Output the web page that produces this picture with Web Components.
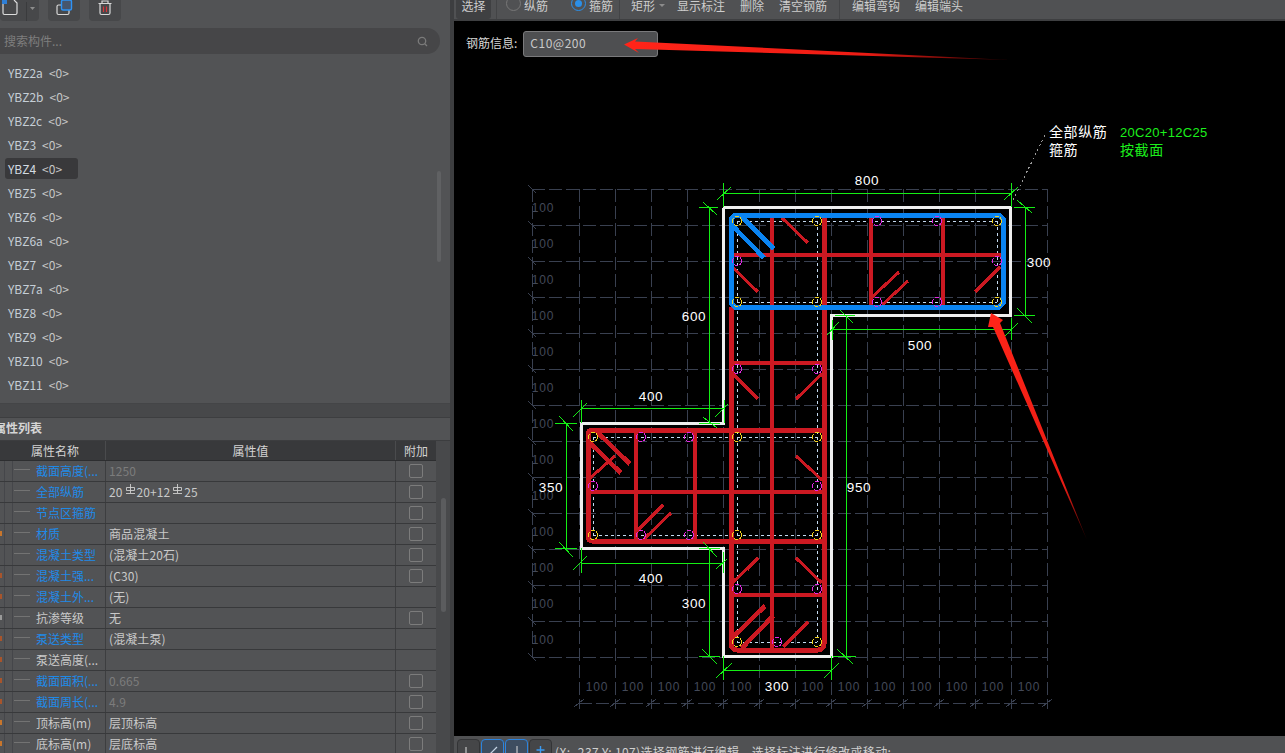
<!DOCTYPE html>
<html lang="zh">
<head>
<meta charset="utf-8">
<title>钢筋编辑</title>
<style>
html,body{margin:0;padding:0;width:100%;height:100%;overflow:hidden;background:#000;}
body{font:12px "Noto Sans CJK SC","Noto Sans",sans-serif;color:#d4d4d4;}
</style>
</head>
<body>
<x-app>
  <x-left-panel slot="left"></x-left-panel>
  <x-main slot="main"></x-main>
</x-app>
<script>
const FONT='"Noto Sans CJK SC","Noto Sans",sans-serif';
function def(name,css,html,init){
  customElements.define(name,class extends HTMLElement{
    connectedCallback(){
      if(this.shadowRoot)return;
      const r=this.attachShadow({mode:'open'});
      r.innerHTML='<style>'+css+'</style>'+(typeof html==='function'?html(this):html);
      if(init)init(this,r);
    }
  });
}
def('x-app',`:host{display:flex;width:1285px;height:753px;overflow:hidden;background:#000;}
 .l{flex:0 0 450px;height:753px;overflow:hidden;}
 .d{flex:0 0 4px;background:#3d3e40;}
 .m{flex:1;min-width:0;height:753px;overflow:hidden;}`,
 `<div class="l"><slot name="left"></slot></div><div class="d"></div><div class="m"><slot name="main"></slot></div>`);

def('x-tool-btn',`:host{display:block;height:21px;background:#47484a;border-radius:0 0 4px 4px;overflow:hidden;}
 svg{display:block;}`,
 h=>{const k=h.getAttribute('kind');
  const ic={
   doc:`<svg width="39" height="21" viewBox="0 0 39 21"><path d="M3 0V13a1.5 1.5 0 0 0 1.5 1.5H15.500a1.500 1.500 0 0 0 1.500-1.500V3L14 0" fill="none" stroke="#dcdcdc" stroke-width="1.200"/><rect x="2" y="0" width="5" height="4" fill="#2f7fd6"/><path d="M26.500 2V21" stroke="#3a3b3d"/><path d="M30 7h5l-2.500 3z" fill="#8d8d8d"/></svg>`,
   copy:`<svg width="32" height="21" viewBox="0 0 32 21"><rect x="9" y="5" width="12" height="9.500" rx="1.500" fill="none" stroke="#d8d8d8" stroke-width="1.200"/><rect x="13.500" y="0" width="10" height="10" rx="1.500" fill="#46566e" stroke="#2e93f5" stroke-width="1.400"/></svg>`,
   trash:`<svg width="32" height="21" viewBox="0 0 32 21"><path d="M11 3.500V13a1.500 1.500 0 0 0 1.500 1.500h7A1.500 1.500 0 0 0 21 13V3.500M9.500 3.500h13M13 3.500V1h6v2.500" fill="none" stroke="#d8d8d8" stroke-width="1.200"/><path d="M14.500 6.500V12M17.500 6.500V12" stroke="#d8343a" stroke-width="1.200"/></svg>`
  };return ic[k];});

def('x-search',`:host{display:block;height:26px;margin:7px 10px 0 -14px;background:#464648;border-radius:13px;position:relative;}
 .t{position:absolute;left:18px;top:0;line-height:26px;font:12px/26px ${FONT};color:#7e7e7e;}
 svg{position:absolute;right:12px;top:8px;}`,
 `<span class="t">搜索构件...</span><svg width="11" height="11" viewBox="0 0 11 11"><circle cx="5" cy="5" r="3.700" fill="none" stroke="#7a7a7a" stroke-width="1.300"/><path d="M7.800 7.800L10 10" stroke="#7a7a7a" stroke-width="1.300"/></svg>`);

def('x-list-item',`:host{display:flex;align-items:center;height:24px;padding-left:5px;font:12px ${FONT};color:#c5ced6;}
 span{display:block;height:21px;line-height:21px;padding:0 3px;border-radius:3px;}
 :host([selected]) span{background:#39393b;color:#d3dbe2;width:67px;}
 i{font-style:normal;margin-left:6px;color:#c6c6c6;}`,
 h=>`<span>${h.getAttribute('name')}<i>&lt;0&gt;</i></span>`);

def('x-rebar-glyph',`:host{display:inline-block;width:11px;height:12px;vertical-align:2px;margin:0 1px 0 2px;}svg{display:block;}`,
 `<svg width="11" height="12" viewBox="0 0 11 12"><path d="M5.500 1V10M1.500 4.500H9.500V7.500H1.500ZM1 10.500H10" fill="none" stroke="#cfcfcf" stroke-width="0.900"/></svg>`);

def('x-prop-row',`:host{display:grid;grid-template-columns:5px 8px 92px 1px 289px 1px 40px;height:21px;box-sizing:border-box;border-bottom:1px solid #38393b;font:12px/20px ${FONT};color:#c9c9c9;background:#525355;}
 .a{position:relative;border-right:1px solid #45464a;}
 .a b{position:absolute;left:0;top:7px;width:1.500px;height:5px;background:var(--o,transparent);}
 .b{border-right:1px solid #45464a;}
 .n{position:relative;padding-left:23px;white-space:nowrap;overflow:hidden;}
 .n::before{content:"";position:absolute;left:1px;top:8px;width:16px;height:1px;background:#737373;}
 :host([blue]) .n{color:#1f8ae8;}
 .s{background:#3d3e40;}
 .v{padding-left:3px;white-space:nowrap;letter-spacing:.1px;}
 :host([muted]) .v{color:#7c7c7c;}
 .c{display:flex;justify-content:center;align-items:center;padding-bottom:1px;}
 .c u{display:block;width:12px;height:12px;border:1px solid #7c7c7c;border-radius:2px;}`,
 h=>`<div class="a"><b style="--o:${h.getAttribute('tick')||'transparent'}"></b></div><div class="b"></div><div class="n">${h.getAttribute('label')}</div><div class="s"></div><div class="v"><slot></slot></div><div class="s"></div><div class="c">${h.hasAttribute('nocheck')?'':'<u></u>'}</div>`);

def('x-prop-table',`:host{display:block;position:relative;}
 .hd{display:grid;grid-template-columns:5px 100px 1px 289px 1px 40px;height:20px;box-sizing:border-box;width:436px;background:#38393b;border-bottom:1px solid #2d2e30;font:12px/19px ${FONT};color:#d3d3d3;text-align:center;}
 .s{background:#4a4b4d;}
 .rows{width:436px;}
 .bar{position:absolute;left:436px;top:0;width:14px;bottom:0;background:#48494b;}
 .th{position:absolute;left:5px;top:57px;width:5px;height:114px;border-radius:3px;background:#5b5c5e;}`,
 `<div class="hd"><span></span><span>属性名称</span><span class="s"></span><span>属性值</span><span class="s"></span><span>附加</span></div><div class="rows"><slot></slot></div><div class="bar"><div class="th"></div></div>`);

def('x-left-panel',`:host{display:block;width:450px;height:753px;background:#525355;overflow:hidden;position:relative;}
 .top{display:flex;height:21px;}
 .list{height:343px;margin-top:6px;position:relative;}
 .scroll{position:absolute;left:437px;top:111px;width:4px;height:91px;border-radius:2px;background:#606163;}
 .band{height:15px;background:#47484a;border-top:1px solid #444547;border-bottom:1px solid #3d3e40;box-sizing:border-box;}
 .head{height:23px;background:#525355;font:bold 12px/20px ${FONT};color:#d5d5d5;padding-left:0;text-indent:-6px;overflow:hidden;border-bottom:1px solid #3c3d3f;box-sizing:border-box;}`,
 `<div class="top">
   <x-tool-btn kind="doc" style="width:39px"></x-tool-btn>
   <x-tool-btn kind="copy" style="width:32px;margin-left:9px"></x-tool-btn>
   <x-tool-btn kind="trash" style="width:32px;margin-left:9px"></x-tool-btn>
 </div>
 <x-search></x-search>
 <div class="list">
  ${['YBZ2a','YBZ2b','YBZ2c','YBZ3','YBZ4','YBZ5','YBZ6','YBZ6a','YBZ7','YBZ7a','YBZ8','YBZ9','YBZ10','YBZ11'].map(n=>`<x-list-item name="${n}"${n==='YBZ4'?' selected':''}></x-list-item>`).join('')}
  <div class="scroll"></div>
 </div>
 <div class="band"></div>
 <div class="head">属性列表</div>
 <x-prop-table>
  <x-prop-row blue muted label="截面高度(...">1250</x-prop-row>
  <x-prop-row blue label="全部纵筋">20<x-rebar-glyph></x-rebar-glyph>20+12<x-rebar-glyph></x-rebar-glyph>25</x-prop-row>
  <x-prop-row blue label="节点区箍筋"></x-prop-row>
  <x-prop-row blue tick="#c8762c" label="材质">商品混凝土</x-prop-row>
  <x-prop-row blue label="混凝土类型">(混凝土20石)</x-prop-row>
  <x-prop-row blue tick="#a8552c" label="混凝土强...">(C30)</x-prop-row>
  <x-prop-row blue nocheck tick="#a8552c" label="混凝土外...">(无)</x-prop-row>
  <x-prop-row tick="#9a9a9a" label="抗渗等级">无</x-prop-row>
  <x-prop-row blue nocheck tick="#a8552c" label="泵送类型">(混凝土泵)</x-prop-row>
  <x-prop-row nocheck tick="#a8552c" label="泵送高度(..."></x-prop-row>
  <x-prop-row blue muted tick="#a8552c" label="截面面积(...">0.665</x-prop-row>
  <x-prop-row blue muted tick="#a8552c" label="截面周长(...">4.9</x-prop-row>
  <x-prop-row tick="#c8762c" label="顶标高(m)">层顶标高</x-prop-row>
  <x-prop-row tick="#c8762c" label="底标高(m)">层底标高</x-prop-row>
 </x-prop-table>`);

def('x-top-bar',`:host{display:flex;align-items:flex-start;height:21px;box-sizing:border-box;background:#505153;border-bottom:2px solid #3e3f41;overflow:hidden;font:12px/12px ${FONT};color:#cdcdcd;white-space:nowrap;}
 .sel{margin-left:2px;width:35px;height:19px;background:#3f4042;border-radius:0 0 3px 3px;text-align:center;line-height:11px;}
 .t{display:block;line-height:11px;}
 .sep{width:1px;height:19px;background:#434446;}
 .r{width:13px;height:13px;border-radius:50%;border:1px solid #777;margin-top:-4px;box-sizing:content-box;position:relative;flex:none;}
 .r.on{border-color:#2b8fe8;}
 .r.on::after{content:"";position:absolute;left:3px;top:3px;width:7px;height:7px;border-radius:50%;background:#2b8fe8;}
 .caret{width:0;height:0;border:3px solid transparent;border-top:3px solid #8c8c8c;margin:4px 0 0 4px;}`,
 `<div class="sel">选择</div>
  <div class="sep" style="margin-left:5px"></div>
  <div class="r" style="margin-left:9px"></div><span class="t" style="margin-left:3px">纵筋</span>
  <div class="r on" style="margin-left:23px"></div><span class="t" style="margin-left:3px">箍筋</span>
  <div class="sep" style="margin-left:6px"></div>
  <span class="t" style="margin-left:11px">矩形</span><div class="caret"></div>
  <span class="t" style="margin-left:12px">显示标注</span>
  <span class="t" style="margin-left:15px">删除</span>
  <span class="t" style="margin-left:15px">清空钢筋</span>
  <div class="sep" style="margin-left:12px"></div>
  <span class="t" style="margin-left:12px">编辑弯钩</span>
  <span class="t" style="margin-left:15px">编辑端头</span>`);

def('x-rebar-field',`:host{position:absolute;left:12px;top:10px;display:flex;align-items:center;gap:6px;font:12px ${FONT};color:#d8d8d8;z-index:1;}
 span{display:block;margin-bottom:3px;}
 .b{display:flex;align-items:center;width:127px;height:21px;padding:0 0 3px 6px;border:1px solid #7a7a7c;border-radius:3px;background:#4e4f51;box-sizing:content-box;position:relative;color:#c9c9c9;letter-spacing:.5px;}
 .b::after{content:"";position:absolute;right:5px;top:11px;border:3px solid transparent;border-top-color:#8c8c8c;}`,
 `<span>钢筋信息:</span><div class="b">C10@200</div>`);

def('x-drawing',`:host{display:block;position:absolute;left:-454px;top:-21px;width:1285px;height:753px;z-index:2;pointer-events:none;}
 svg{display:block;shape-rendering:crispEdges;}text{font-family:"Liberation Sans",sans-serif;}
 .sm{shape-rendering:geometricPrecision;}`,
 ()=>{
  let s='';
  const line=(a,b,c,d,col,w,extra='')=>`<line x1="${a}" y1="${b}" x2="${c}" y2="${d}" stroke="${col}" stroke-width="${w}" ${extra}/>`;
  const GR='#394050',DASH='stroke-dasharray="13 4"';
  for(let y=189;y<=657;y+=36) s+=line(532,y,1047,y,GR,1,DASH);
  s+=line(532,189,532,657,GR,1,DASH);
  for(let x=579;x<=1047;x+=36) s+=line(x,189,x,709,GR,1,DASH);
  s+=line(579,703,1047,703,GR,1,DASH);
  for(let y=189;y<=657;y+=36) s+=line(528,y-4,536,y+4,GR,1);
  for(let x=579;x<=1047;x+=36) s+=line(x-5,707,x+5,699,GR,1);
  for(let y=207;y<=639;y+=36) s+=`<text x="543" y="${y+4.500}" text-anchor="middle" font-size="12" fill="#434958" letter-spacing=".8">100</text>`;
  for(let x=597;x<=1029;x+=36) if(x!==777) s+=`<text x="${x}" y="691" text-anchor="middle" font-size="12" fill="#434958" letter-spacing=".8">100</text>`;
  s+=`<path d="M723 207.500H1010.500V315H831.500V656H723.500V548H581V423.500H723.500V207.500" fill="none" stroke="#efefef" stroke-width="3"/>`;
  const D='#c4daf0',DD='stroke-dasharray="3 3"';
  [[737,221,997,221],[737,302,997,302],[593,437,817,437],[593,535,817,535],[737,642,817,642],[737,221,737,642],[817,221,817,642],[593,437,593,535],[997,221,997,302]].forEach(l=>s+=line(l[0],l[1],l[2],l[3],D,1,DD));
  const R='#cb1922';
  const red=(a,b,c,d,w=4)=>{s+=line(a,b,c,d,R,w);};
  s+=`<path d="M731 307V644a6 6 0 0 0 6 6H818a6 6 0 0 0 6-6V215" fill="none" stroke="${R}" stroke-width="5"/>`;
  s+=`<path d="M731 430H592a4 4 0 0 0-4 4V537a4 4 0 0 0 4 4H824M731 430H824" fill="none" stroke="${R}" stroke-width="5"/>`;
  red(771.500,216,771.500,650,4);
  red(871,216,871,305);red(943,216,943,305);
  red(733,255,1001,255);
  red(636,430,636,541);red(695,430,695,541);
  red(590,492,822,492);
  red(733,363,822,363);red(733,595,822,595);
  [[782,218,808,243],[732,267,758,292],[871,298,899,272],[882,305,908,281],[975,292,1000,267],
   [733,374,758,399],[822,374,796,399],
   [589,479,615,456],[796,456,822,480],[636,532,663,505],[645,538,671,513],[747,570,758,558],
   [732,583,758,558],[796,558,822,583],[783,647,808,622]].forEach(h=>red(h[0],h[1],h[2],h[3],3));
  [[589,442,621,473],[597,432,630,464],[732,638,765,606],[742,648,773,616]].forEach(h=>red(h[0],h[1],h[2],h[3],4.500));
  const B='#0a84f2';
  s+=`<path d="M735 215H999L1003 219V303L999 307H735L731 303V219Z" fill="none" stroke="${B}" stroke-width="5"/>`;
  s+=line(732,225,764,258,B,4.500)+line(742,217,774,249,B,4.500);
  const Y='#f4d21f',M='#e327e3';
  const circ=(c,col)=>`<circle cx="${c[0]}" cy="${c[1]}" r="4.500" fill="none" stroke="${col}" stroke-width="1" stroke-dasharray="5 1"/>`;
  [[737,221],[817,221],[997,221],[737,302],[817,302],[997,302],[593,437],[737,437],[817,437],[593,535],[737,535],[817,535],[737,642],[817,642]].forEach(c=>s+=circ(c,Y));
  [[877,221],[937,221],[737,261],[997,261],[877,302],[937,302],[641,437],[689,437],[593,486],[817,486],[641,535],[689,535],[737,369],[817,369],[737,589],[817,589],[777,642]].forEach(c=>s+=circ(c,M));
  const G='#14ee14';
  [
   [723,193,1011,193],[723,183,723,207],[1011,183,1011,207],[717,200,731,187],[1004,200,1018,187],
   [1025,207,1025,315],[1014,207,1035,207],[1017,200,1032,213],[1014,315,1035,315],[1017,308,1032,323],
   [709,207,709,423],[699,207,718,207],[703,202,717,215],[699,423,720,423],[703,417,717,428],
   [831,329,1011,329],[832,320,832,340],[827,335,839,322],[1011,318,1011,340],[1004,337,1018,323],
   [846,315,846,656],[835,315,855,315],[840,310,853,323],[833,656,856,656],[837,649,853,664],
   [581,408,724,408],[581,400,581,423],[573,417,587,403],[724,400,724,423],[715,417,728,404],
   [566,423,566,548],[555,423,577,423],[559,416,573,431],[555,548,577,548],[559,542,573,557],
   [581,563,723,563],[581,548,581,573],[573,570,587,556],[723,552,723,573],[716,569,727,559],[699,548,720,548],[703,542,717,557],
   [709,548,709,656],[699,656,720,656],[702,649,717,664],
   [723,670,831,670],[723,656,723,680],[716,678,732,663],[831,656,831,680],[824,678,839,663]
  ].forEach(l=>s+=line(l[0],l[1],l[2],l[3],G,1));
  [[867,184.500,'800'],[1039,266.500,'300'],[694,320.500,'600'],[920,349.500,'500'],[651,400.500,'400'],[551,491.500,'350'],[859,491.500,'950'],[651,582.500,'400'],[694,607.500,'300'],[777,690.500,'300']]
   .forEach(t=>s+=`<text x="${t[0]}" y="${t[1]}" text-anchor="middle" font-size="13.500" fill="#fff" letter-spacing=".6">${t[2]}</text>`);
  s+=line(1013,200,1046,133,'#9a9a9a',1,'stroke-dasharray="2 3"');
  const C=`font-family:${FONT.replace(/"/g,"'")}`;
  s+=`<text x="1049" y="136.500" font-size="14" fill="#fff" letter-spacing=".6" style="${C}">全部纵筋</text>`;
  s+=`<text x="1049" y="155" font-size="14" fill="#fff" letter-spacing=".6" style="${C}">箍筋</text>`;
  s+=`<text x="1120" y="136.500" font-size="13" fill="#1cf01c" letter-spacing=".3">20C20+12C25</text>`;
  s+=`<text x="1120" y="155" font-size="14" fill="#1cf01c" letter-spacing=".6" style="${C}">按截面</text>`;
  const defs=`<defs><linearGradient id="a1" gradientUnits="userSpaceOnUse" x1="640" y1="44" x2="1010" y2="60"><stop offset="0" stop-color="#ff2418"/><stop offset=".6" stop-color="#ee1c14"/><stop offset="1" stop-color="#300"/></linearGradient><linearGradient id="a2" gradientUnits="userSpaceOnUse" x1="995" y1="325" x2="1087" y2="540"><stop offset="0" stop-color="#ff2418"/><stop offset=".75" stop-color="#e81c14"/><stop offset="1" stop-color="#300"/></linearGradient></defs>`;
  s+=`<path class="sm" d="M624 44.500L638 38L635 41.500L1010 60L635 49L639 53Z" fill="url(#a1)"/>`;
  s+=`<path class="sm" d="M991 313L1003 320L1000 323L1087 540L993 327L988 327Z" fill="url(#a2)"/>`;
  return `<svg width="1285" height="753" viewBox="0 0 1285 753">${defs}${s}</svg>`;
 });

def('x-status-bar',`:host{display:block;position:relative;height:17px;background:#505153;overflow:hidden;font:12px/14px ${FONT};color:#cfcfcf;white-space:nowrap;}
 .row{display:flex;align-items:flex-start;padding:3px 0 0 3px;gap:1px;}
 .b{width:23px;height:24px;box-sizing:border-box;border:1px solid #333436;border-radius:4px 4px 0 0;background:#454648;position:relative;flex:none;}
 .b.on{border-color:#2b84e0;background:#3e4d60;}
 svg{position:absolute;left:3px;top:3px;}
 .tx{margin:6px 0 0 2px;letter-spacing:.35px;}`,
 `<div class="row">
  <div class="b"><svg width="16" height="14"><path d="M5 4V13H11" fill="none" stroke="#ddd"/></svg></div>
  <div class="b on"><svg width="16" height="14"><path d="M3 13L12 4" fill="none" stroke="#c5d4e4" stroke-width="1.200"/></svg></div>
  <div class="b on"><svg width="16" height="14"><path d="M8 3V14" fill="none" stroke="#ddd"/></svg></div>
  <div class="b"><svg width="16" height="14"><path d="M7.500 3V11M3.500 7H11.500" fill="none" stroke="#3a9af2" stroke-width="1.400"/></svg></div>
  <span class="tx">(X: -237 Y: 107)选择钢筋进行编辑，选择标注进行修改或移动;</span>
 </div>`);

def('x-main',`:host{display:flex;flex-direction:column;width:831px;height:753px;background:#000;overflow:hidden;}
 .c{flex:1;position:relative;background:#000;}`,
 `<x-top-bar></x-top-bar><div class="c"><x-rebar-field></x-rebar-field><x-drawing></x-drawing></div><x-status-bar></x-status-bar>`);
</script>
</body>
</html>
